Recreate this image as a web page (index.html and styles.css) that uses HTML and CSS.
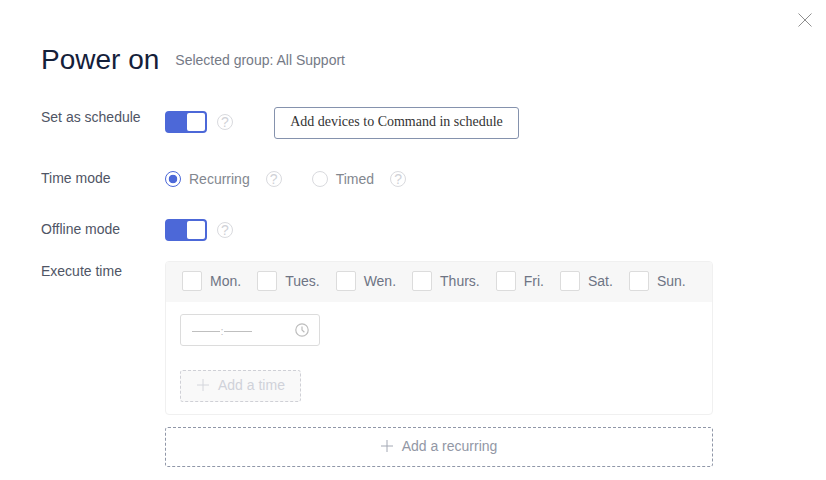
FILE: index.html
```html
<!DOCTYPE html>
<html lang="en">
<head>
<meta charset="utf-8">
<title>Power on</title>
<link rel="stylesheet" href="styles.css">
</head>
<body>
<div class="dialog">
  <button class="close" aria-label="Close">
    <svg width="14" height="14" viewBox="0 0 14 14"><path d="M.5.5l13 13M13.5.5l-13 13" fill="none" stroke="#8f8f8f" stroke-width="1"/></svg>
  </button>
  <header class="head">
    <h1 class="title">Power on</h1>
    <span class="sub">Selected group: All Support</span>
  </header>

  <div class="row row-schedule">
    <label class="label">Set as schedule</label>
    <div class="ctl">
      <span class="toggle"><span class="knob"></span></span>
      <span class="help">?</span>
      <button class="add-devices">Add devices to Command in schedule</button>
    </div>
  </div>

  <div class="row row-mode">
    <label class="label">Time mode</label>
    <div class="ctl">
      <span class="radio on"></span><span class="opt">Recurring</span>
      <span class="help help-r">?</span>
      <span class="radio second"></span><span class="opt">Timed</span>
      <span class="help help-r">?</span>
    </div>
  </div>

  <div class="row row-offline">
    <label class="label">Offline mode</label>
    <div class="ctl">
      <span class="toggle"><span class="knob"></span></span>
      <span class="help">?</span>
    </div>
  </div>

  <div class="row row-exec">
    <label class="label">Execute time</label>
    <div class="exec">
      <div class="panel">
        <div class="days">
          <span class="day"><span class="check"></span>Mon.</span>
          <span class="day"><span class="check"></span>Tues.</span>
          <span class="day"><span class="check"></span>Wen.</span>
          <span class="day"><span class="check"></span>Thurs.</span>
          <span class="day"><span class="check"></span>Fri.</span>
          <span class="day"><span class="check"></span>Sat.</span>
          <span class="day"><span class="check"></span>Sun.</span>
        </div>
        <div class="panel-body">
          <div class="time">
            <span class="dash"></span><span class="colon">:</span><span class="dash"></span>
            <svg class="clock" width="14" height="14" viewBox="0 0 14 14"><circle cx="7" cy="7" r="6.2" fill="none" stroke="#bdbdbd" stroke-width="1.2"/><path d="M7 3.4V7l2.4 2.2" fill="none" stroke="#bdbdbd" stroke-width="1.2"/></svg>
          </div>
          <button class="add-time"><svg width="12" height="12" viewBox="0 0 12 12"><path d="M6 0v12M0 6h12" stroke="#d4d6dc" fill="none"/></svg>Add a time</button>
        </div>
      </div>
      <button class="add-rec"><svg width="12" height="12" viewBox="0 0 12 12"><path d="M6 0v12M0 6h12" stroke="#a3a8b4" fill="none"/></svg>Add a recurring</button>
    </div>
  </div>
</div>
</body>
</html>
```
FILE: styles.css
```css
* { box-sizing: border-box; }
html, body { margin: 0; padding: 0; background: #fff; }
body { font-family: "Liberation Sans", Arial, sans-serif; font-size: 14px; color: #4a5060; width: 826px; height: 480px; overflow: hidden; }
button { font: inherit; background: #fff; padding: 0; margin: 0; }
.dialog { position: relative; padding: 41px 0 0 41px; }
.close { position: absolute; top: 13px; left: 798px; width: 14px; height: 14px; border: 0; background: none; line-height: 0; }
.head { display: flex; align-items: center; height: 37px; }
.title { margin: 0; font-size: 28px; line-height: 37px; font-weight: 400; color: #14203a; }
.sub { margin-left: 16px; color: #757a86; font-size: 14px; }
.row { display: flex; }
.label { width: 124px; flex: none; color: #4f5565; line-height: 20px; }
.ctl { display: flex; align-items: center; }
.row-schedule { margin-top: 29px; height: 32px; }
.row-schedule .toggle, .row-schedule .help { margin-bottom: 2px; }
.row-mode { margin-top: 29px; height: 22px; }
.row-offline { margin-top: 29px; height: 22px; }
.row-exec { margin-top: 20px; }
.toggle { display: flex; justify-content: flex-end; width: 42px; height: 22px; border: 2px solid #4c68d8; border-radius: 4px; background: #4c68d8; }
.knob { width: 18px; height: 18px; background: #fff; border-radius: 2px; }
.help { display: inline-flex; align-items: center; justify-content: center; width: 16px; height: 16px; margin-left: 10px; border: 1px solid #d9dade; border-radius: 50%; color: #d0d2d7; font-size: 14px; line-height: 1; }
.help-r { margin-left: 16px; }
.add-devices { width: 245px; height: 32px; margin-left: 41px; padding-bottom: 2px; border: 1px solid #8592ad; border-radius: 3px; font-family: "Liberation Serif", "Times New Roman", serif; font-size: 14px; color: #333; }
.radio { width: 16px; height: 16px; border: 1px solid #d9dade; border-radius: 50%; background: #fff; flex: none; }
.radio.on { border-color: #4c68d8; background: radial-gradient(circle, #4c68d8 0 4px, #fff 4.6px); }
.radio.second { margin-left: 30px; }
.opt { margin-left: 8px; color: #83878f; }
.exec { width: 548px; }
.panel { height: 154px; border: 1px solid #f0f0f0; border-radius: 4px; overflow: hidden; }
.days { display: flex; height: 40px; background: #f7f7f7; align-items: center; padding: 0 0 2px 16px; color: #6e7484; }
.day { display: flex; align-items: center; margin-right: 16px; }
.check { width: 20px; height: 20px; margin-right: 8px; background: #fff; border: 1px solid #dcdcdc; border-radius: 2px; }
.panel-body { padding: 12px 0 0 14px; }
.time { position: relative; display: flex; align-items: center; width: 140px; height: 32px; padding: 2px 0 0 11px; border: 1px solid #dcdcdc; border-radius: 3px; }
.dash { width: 28px; height: 1px; background: #bfbfbf; }
.colon { width: 4px; text-align: center; color: #bfbfbf; font-size: 11px; line-height: 1; }
.clock { position: absolute; right: 10px; top: 8px; }
.add-time { display: flex; align-items: center; width: 121px; height: 32px; margin-top: 24px; padding: 0 0 2px 16px; background: #f9f9f9; border: 1px dashed #cfd0d6; border-radius: 3px; color: #d0d2d9; }
.add-time svg { margin-right: 9px; }
.add-rec { display: flex; align-items: center; justify-content: center; width: 548px; height: 40px; margin-top: 12px; padding-bottom: 2px; border: 1px dashed #9097a8; border-radius: 3px; color: #9297a5; }
.add-rec svg { margin-right: 9px; }
```
